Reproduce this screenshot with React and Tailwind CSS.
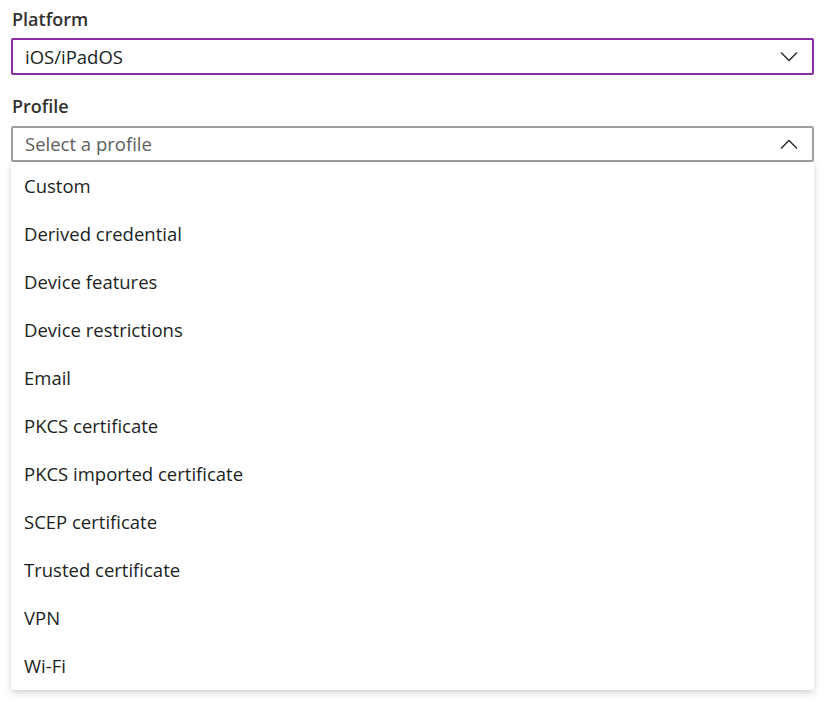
import React from "react";

const items = [
  "Custom",
  "Derived credential",
  "Device features",
  "Device restrictions",
  "Email",
  "PKCS certificate",
  "PKCS imported certificate",
  "SCEP certificate",
  "Trusted certificate",
  "VPN",
  "Wi-Fi",
];

function Chevron({ up }) {
  return (
    <svg width="18" height="10" viewBox="0 0 18 10" className="shrink-0">
      <path
        d={up ? "M1 9.5 L9 1.5 L17 9.5" : "M1 0.5 L9 8.5 L17 0.5"}
        fill="none"
        stroke="#222"
        strokeWidth="1.3"
      />
    </svg>
  );
}

export default function App() {
  return (
    <div
      className="w-[825px] h-[702px] bg-white text-[#323130]"
      style={{ fontFamily: '"Open Sans", "Noto Sans", sans-serif' }}
    >
      <div className="pl-[11px] pr-[11px] pt-[7px]">
        <div className="pl-[1px] text-[18px] font-semibold leading-[24px] h-[31px]">Platform</div>
        <div className="h-[37px] border-2 border-[#8a2da5] rounded-[2px] flex items-center justify-between pl-[12px] pr-[14px]">
          <span className="text-[18.5px] leading-[24px] text-[#201f1e]">iOS/iPadOS</span>
          <Chevron />
        </div>
        <div className="pl-[1px] mt-[19px] text-[18px] font-semibold leading-[24px] h-[32px]">Profile</div>
        <div className="h-[36px] border-2 border-[#a19f9d] rounded-[2px] flex items-center justify-between pl-[12px] pr-[14px]">
          <span className="text-[18.5px] leading-[24px] text-[#605e5c]">Select a profile</span>
          <Chevron up />
        </div>
        <div className="bg-white rounded-b-[2px] shadow-[0_3px_7px_rgba(0,0,0,0.16),0_0px_2px_rgba(0,0,0,0.08)]">
          {items.map((t) => (
            <div key={t} className="h-[48px] flex items-center pl-[13px] text-[18.5px] text-[#201f1e]">
              {t}
            </div>
          ))}
        </div>
      </div>
    </div>
  );
}
